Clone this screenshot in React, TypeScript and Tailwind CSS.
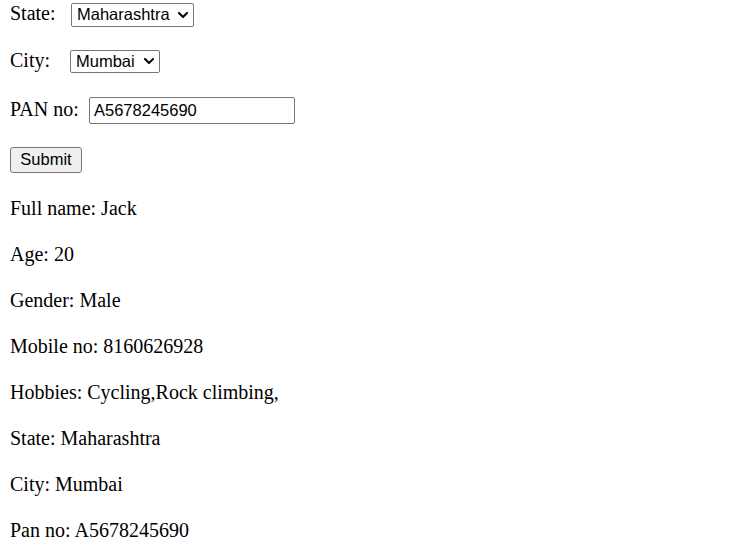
import React from "react";

function Chevron() {
  return (
    <svg width="10" height="6" viewBox="0 0 10 6" className="shrink-0">
      <polyline points="1,1 5,5 9,1" fill="none" stroke="#000" strokeWidth="2" strokeLinecap="square" />
    </svg>
  );
}

function FakeSelect({ value, width, height }: { value: string; width: string; height: string }) {
  return (
    <div
      className={`flex items-center justify-between border border-[#767676] rounded-[2px] bg-white pl-[5px] pr-[5px] font-['Liberation_Sans',Arial,sans-serif] text-[16.5px] leading-[19px] text-black ${width} ${height}`}
    >
      <span>{value}</span>
      <Chevron />
    </div>
  );
}

export default function App() {
  const lines = [
    "Full name: Jack",
    "Age: 20",
    "Gender: Male",
    "Mobile no: 8160626928",
    "Hobbies: Cycling,Rock climbing,",
    "State: Maharashtra",
    "City: Mumbai",
    "Pan no: A5678245690",
  ];
  return (
    <div className="min-h-[545px] bg-white pl-[10px] font-['Liberation_Serif','Times_New_Roman',serif] text-[20px] leading-[23px] text-black">
      <div className="flex items-baseline pt-[2px]">
        <span className="w-[61px]">State:</span>
        <FakeSelect value="Maharashtra" width="w-[123px]" height="h-[24px]" />
      </div>
      <div className="flex items-baseline mt-[22px]">
        <span className="w-[60px]">City:</span>
        <FakeSelect value="Mumbai" width="w-[90px]" height="h-[23px]" />
      </div>
      <div className="flex items-baseline mt-[24px]">
        <span className="w-[79px]">PAN no:</span>
        <div className="flex items-center w-[206px] h-[27px] border border-[#767676] rounded-[2px] pl-[4px] font-['Liberation_Sans',Arial,sans-serif] text-[16.5px] leading-[19px] text-black">
          A5678245690
        </div>
      </div>
      <div className="mt-[23px] flex">
        <div className="flex items-center justify-center w-[72px] h-[26px] border border-[#767676] rounded-[3px] bg-[#efefef] font-['Liberation_Sans',Arial,sans-serif] text-[16.5px] leading-[19px] text-black">
          Submit
        </div>
      </div>
      <div className="mt-[24px]">
        {lines.map((l) => (
          <div key={l} className="h-[46px]">
            {l}
          </div>
        ))}
      </div>
    </div>
  );
}
